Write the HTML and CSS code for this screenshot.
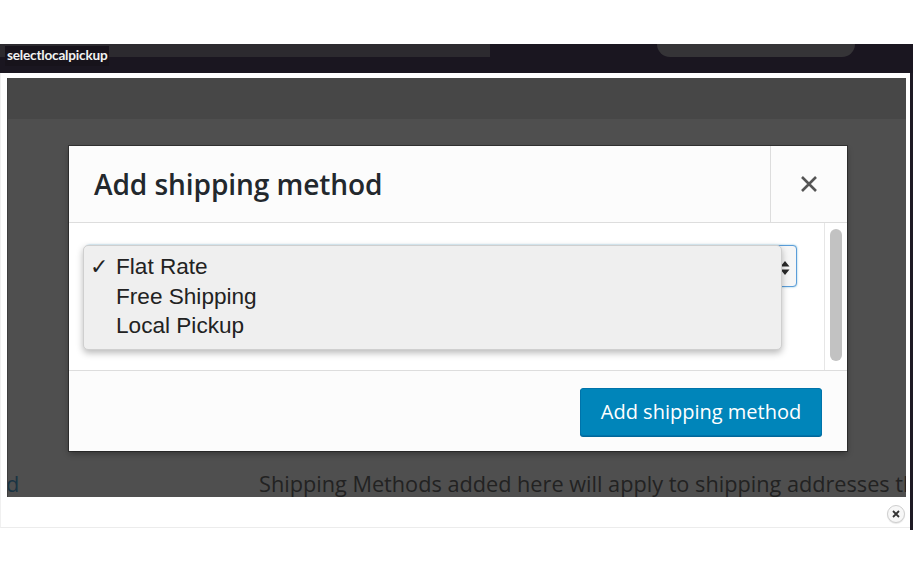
FILE: index.html
```html
<!DOCTYPE html>
<html>
<head>
<meta charset="utf-8">
<link rel="stylesheet" href="styles.css">
</head>
<body>
<div class="spacer"></div>
<div class="window">
  <div class="topbar">
    <div class="band-left"></div>
    <div class="band-tab"></div>
    <span class="caption">selectlocalpickup</span>
  </div>
  <div class="lower">
    <div class="frame">
      <div class="backdrop">
        <div class="page-head"></div>
        <div class="modal">
          <div class="modal-head">
            <h1 class="modal-title">Add shipping method</h1>
            <div class="modal-close">
              <svg width="18" height="18" viewBox="0 0 18 18"><path d="M2 2 L16 16 M16 2 L2 16" stroke="#555" stroke-width="2.6" stroke-linecap="butt"/></svg>
            </div>
          </div>
          <div class="modal-body">
            <div class="body-main">
              <div class="select">
                <svg class="arrows" width="10" height="14" viewBox="0 0 10 14"><path d="M5 0 L9.5 5.5 L0.5 5.5 Z M5 14 L9.5 8.5 L0.5 8.5 Z" fill="#2a2a2a"/></svg>
                <ul class="menu">
                  <li class="item"><span class="check">✓</span>Flat Rate</li>
                  <li class="item"><span class="check"></span>Free Shipping</li>
                  <li class="item"><span class="check"></span>Local Pickup</li>
                </ul>
              </div>
            </div>
            <div class="scroll-track"><div class="scroll-thumb"></div></div>
          </div>
          <div class="modal-foot">
            <button class="btn-primary">Add shipping method</button>
          </div>
        </div>
        <div class="page-row">
          <span class="link-frag">d</span>
          <span class="desc">Shipping Methods added here will apply to shipping addresses that match</span>
        </div>
      </div>
      <div class="strip">
        <span class="dismiss">
          <svg width="8" height="8" viewBox="0 0 8 8"><path d="M1 1 L7 7 M7 1 L1 7" stroke="#333" stroke-width="1.8"/></svg>
        </span>
      </div>
    </div>
    <div class="edge"></div>
  </div>
</div>
</body>
</html>
```

FILE: styles.css
```css
* { box-sizing: border-box; }
html, body { margin: 0; padding: 0; background: #fff; }
body { width: 916px; height: 573px; overflow: hidden; font-family: "Open Sans", sans-serif; }

.spacer { height: 44px; }

.window { width: 913px; }

.topbar {
  position: relative;
  height: 29px;
  background: #1a1620;
  display: flex;
  align-items: flex-start;
}
.band-left {
  width: 490px;
  height: 13px;
  background: #2c2a2f;
}
.band-tab {
  margin-left: 167px;
  width: 198px;
  height: 13px;
  background: #353437;
  border-radius: 0 0 14px 14px;
}
.caption {
  position: absolute;
  left: 5px;
  top: 2px;
  padding: 1px 2px 3px 2px;
  background: #17131b;
  color: #f2f2f2;
  font-family: "Lato", sans-serif;
  font-weight: 700;
  font-size: 13.6px;
  line-height: 16px;
  letter-spacing: -0.2px;
}

.lower { display: flex; }
.frame {
  width: 910px;
  height: 455px;
  background: #fff;
  padding: 5px 4px 0 6px;
  border-bottom: 1px solid #ececec;
  border-left: 1px solid #f0f0f0;
  display: flex;
  flex-direction: column;
}
.edge { width: 3px; height: 457px; background: #1e1a24; }

.backdrop {
  height: 419px;
  background: #4f4f4f;
  overflow: hidden;
  display: flex;
  flex-direction: column;
  border-left: 1px solid #3e3e3e;
}
.page-head { height: 41px; background: #474747; flex: none; }

.modal {
  flex: none;
  margin: 27px 0 0 61px;
  width: 778px;
  height: 305px;
  background: #fcfcfc;
  box-shadow: 0 0 0 1px rgba(0,0,0,0.35), 0 3px 6px rgba(0,0,0,0.3);
  display: flex;
  flex-direction: column;
}
.modal-head {
  height: 77px;
  display: flex;
  border-bottom: 1px solid #dddddd;
}
.modal-title {
  flex: 1;
  margin: 0;
  padding: 0 0 0 25px;
  align-self: center;
  font-weight: 600;
  font-size: 28.1px;
  line-height: 38px;
  color: #23282d;
  letter-spacing: -0.1px;
}
.modal-close {
  width: 77px;
  border-left: 1px solid #dddddd;
  display: flex;
  align-items: center;
  justify-content: center;
}

.modal-body {
  height: 148px;
  display: flex;
  background: #fff;
  border-bottom: 1px solid #dddddd;
}
.body-main { flex: 1; padding: 22px 0 0 17px; }
.select {
  position: relative;
  width: 711px;
  height: 42px;
  border: 1px solid #5b9dd9;
  border-radius: 4px;
  background: #f6f6f6;
  box-shadow: 0 0 2px rgba(30,140,190,0.6);
}
.arrows { position: absolute; right: 6px; top: 15px; }
.menu {
  position: absolute;
  left: -4px;
  top: -1px;
  width: 699px;
  margin: 0;
  padding: 6px 0 8px 0;
  list-style: none;
  background: #efefef;
  border: 1px solid #cfcfcf;
  border-radius: 5px;
  box-shadow: 0 3px 7px rgba(0,0,0,0.28);
}
.item {
  display: flex;
  height: 29.5px;
  line-height: 29.5px;
  font-family: "Liberation Sans", Arial, sans-serif;
  font-size: 22.6px;
  color: #222;
}
.check {
  width: 32px;
  padding-left: 6px;
  font-family: "DejaVu Sans", sans-serif;
  font-size: 22px;
  font-weight: 700;
  color: #222;
}

.scroll-track {
  width: 23px;
  border-left: 1px solid #e6e6e6;
  padding: 6px 0 0 5px;
}
.scroll-thumb {
  width: 12px;
  height: 132px;
  background: #c2c2c2;
  border-radius: 6px;
}

.modal-foot {
  flex: 1;
  display: flex;
  justify-content: flex-end;
  align-items: flex-start;
  padding: 17px 25px 0 0;
  background: #fcfcfc;
}
.btn-primary {
  width: 242px;
  height: 48px;
  background: #0085ba;
  border: 1px solid #0073aa;
  border-radius: 3px;
  box-shadow: 0 1px 0 #006799;
  color: #fff;
  font-family: "Open Sans", sans-serif;
  font-size: 20px;
  padding: 0 0 2px 0;
  cursor: pointer;
}

.page-row {
  flex: none;
  margin-top: 18px;
  display: flex;
  white-space: nowrap;
  font-size: 21.7px;
  line-height: 30px;
  color: #222222;
}
.link-frag { flex: none; width: 253px; margin-left: -2px; color: #1a3443; }
.desc { flex: none; }

.strip {
  flex: 1;
  display: flex;
  justify-content: flex-end;
  align-items: center;
  padding-right: 1px;
}
.dismiss {
  width: 18px;
  height: 18px;
  margin-top: 3px;
  border-radius: 50%;
  border: 1px solid #cfcfcf;
  background: #f7f7f7;
  box-shadow: 0 1px 1px rgba(0,0,0,0.1);
  display: flex;
  align-items: center;
  justify-content: center;
}
```
